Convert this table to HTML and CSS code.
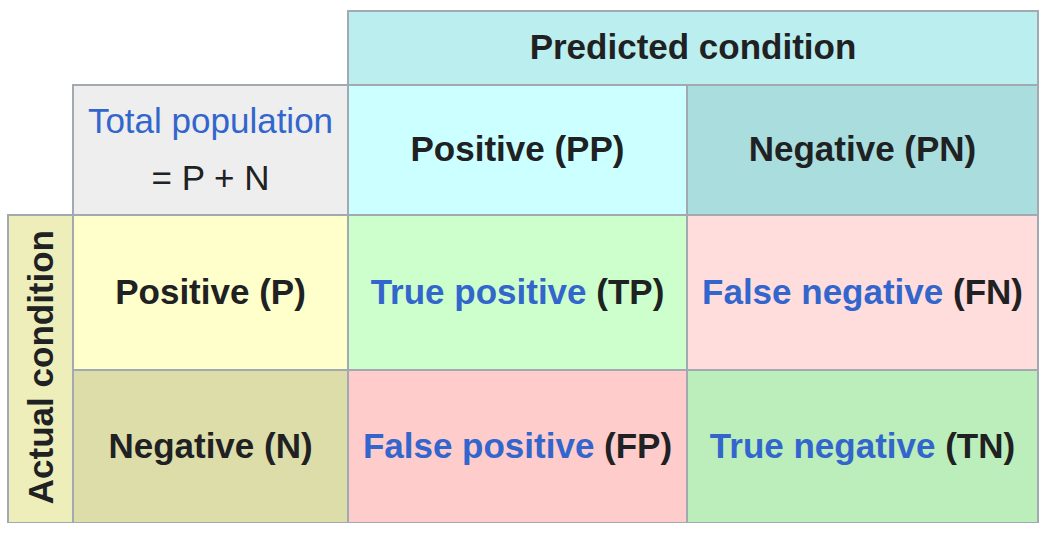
FILE: index.html
```html
<!DOCTYPE html>
<html lang="en">
<head>
<meta charset="utf-8">
<title>Confusion matrix</title>
<link rel="stylesheet" href="styles.css">
</head>
<body>
<div class="matrix">
  <div class="cell predicted bold"><span>Predicted condition</span></div>
  <div class="cell total"><span class="two-line"><span class="link">Total population</span><br>= P + N</span></div>
  <div class="cell pp bold"><span>Positive (PP)</span></div>
  <div class="cell pn bold"><span>Negative (PN)</span></div>
  <div class="cell actual bold"><span class="vertical">Actual condition</span></div>
  <div class="cell ap bold"><span>Positive (P)</span></div>
  <div class="cell tp bold"><span><span class="link">True positive</span> (TP)</span></div>
  <div class="cell fn bold"><span><span class="link">False negative</span> (FN)</span></div>
  <div class="cell an bold"><span>Negative (N)</span></div>
  <div class="cell fp bold"><span><span class="link">False positive</span> (FP)</span></div>
  <div class="cell tn bold"><span><span class="link">True negative</span> (TN)</span></div>
</div>
</body>
</html>
```

FILE: styles.css
```css
html, body {
  margin: 0;
  padding: 0;
  background: #ffffff;
}

body {
  font-family: "Liberation Sans", Arial, sans-serif;
  font-size: 35px;
  color: #202122;
}

.matrix {
  display: grid;
  grid-template-columns: 65px 275px 339px 351px;
  grid-template-rows: 74px 130px 155px 153px;
  margin: 11px 0 0 8px;
  width: 1030px;
}

.cell {
  margin: -1px;
  border: 2px solid #a2a9b1;
  padding-bottom: 2px;
  display: flex;
  align-items: center;
  justify-content: center;
  text-align: center;
  white-space: nowrap;
}

.bold { font-weight: bold; }

.link { color: #3366cc; }

.predicted { grid-column: 3 / 5; grid-row: 1; background: #bbeeee; }
.total { grid-column: 2; grid-row: 2; background: #eeeeee; }
.two-line { line-height: 57px; }
.pp { grid-column: 3; grid-row: 2; background: #ccffff; }
.pn { grid-column: 4; grid-row: 2; background: #aadddd; }
.actual { grid-column: 1; grid-row: 3 / 5; background: #eeeebb; padding-bottom: 4px; }
.ap { grid-column: 2; grid-row: 3; background: #ffffcc; }
.tp { grid-column: 3; grid-row: 3; background: #ccffcc; }
.fn { grid-column: 4; grid-row: 3; background: #ffdddd; }
.an { grid-column: 2; grid-row: 4; background: #ddddaa; }
.fp { grid-column: 3; grid-row: 4; background: #ffcccc; }
.tn { grid-column: 4; grid-row: 4; background: #bbeebb; }

.vertical {
  writing-mode: vertical-rl;
  transform: rotate(180deg);
}
```
